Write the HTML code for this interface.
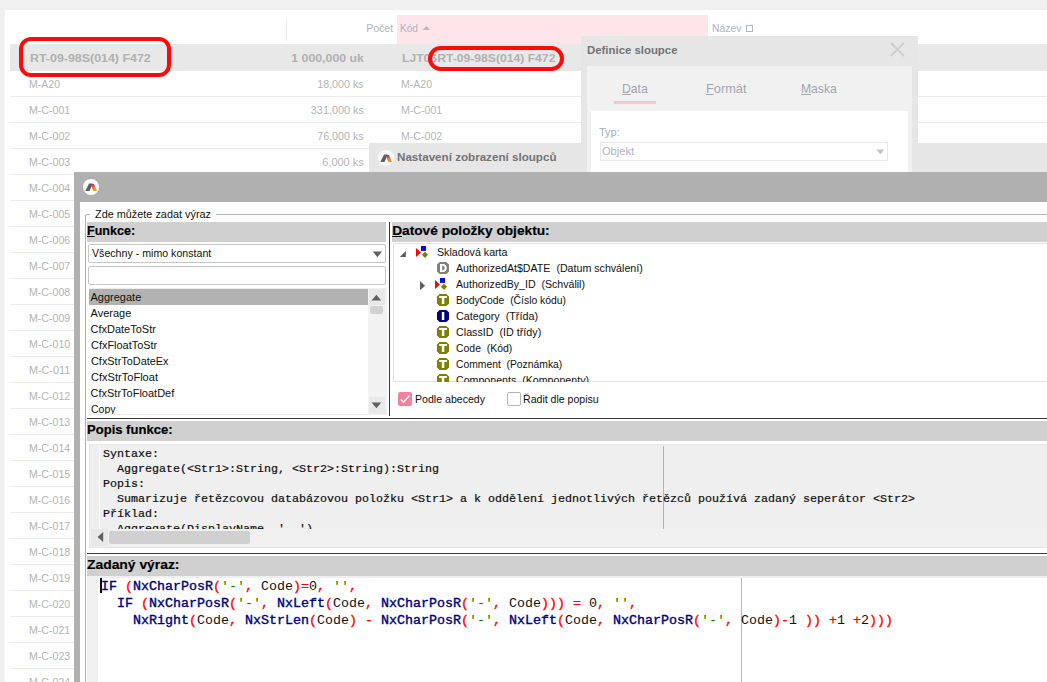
<!DOCTYPE html>
<html><head><meta charset="utf-8"><title>UI</title><style>
html,body{margin:0;padding:0;}
body{width:1047px;height:682px;overflow:hidden;background:#f0f0f0;position:relative;font-family:"Liberation Sans", sans-serif;}
div{position:absolute;box-sizing:border-box;overflow:hidden;}
.t{position:absolute;white-space:pre;line-height:1;display:block;}
.m{font-family:"Liberation Mono", monospace;}
svg{position:absolute;left:0;top:0;display:block;}
u{text-decoration:underline;text-underline-offset:1px;}
b{font-weight:700;}
.k{color:#000080;-webkit-text-stroke:0.35px #000080;} .p{color:#ff0000;-webkit-text-stroke:0.3px #ff0000;} .s{color:#008000;} .n{color:#101010;}
</style></head><body><div style="left:5px;top:10px;width:1042px;height:672px;background:#ffffff;"><div style="left:392px;top:5px;width:311px;height:29px;background:#fde5e9;"></div><div style="left:281px;top:8px;width:1px;height:23px;background:#e9e9e9;"></div><span class="t" style="top:13.29px;font-size:11px;color:#b0b4c0;right:654.00px;transform:scaleX(0.9595);transform-origin:100% 0;">Počet</span><span class="t" style="top:13.29px;font-size:11px;color:#b0b4c0;left:395.30px;transform:scaleX(0.9194);transform-origin:0 0;">Kód</span><div style="left:417px;top:15px;width:9px;height:6px"><svg width="9" height="6"><path d="M0.6 5 L4.4 0.9 L8.2 5 Z" fill="#bcbcbc"/></svg></div><span class="t" style="top:13.29px;font-size:11px;color:#b0b4c0;left:706.50px;transform:scaleX(0.9459);transform-origin:0 0;">Název</span><div style="left:741px;top:15px;width:7px;height:7px;background:transparent;border:1px solid #b8b8b8;"></div><div style="left:5px;top:34px;width:1037px;height:27px;background:#e8e8e8;"></div><span class="t" style="top:42.69px;font-size:11px;color:#b0b0b0;font-weight:700;left:25.00px;transform:scaleX(1.1280);transform-origin:0 0;">RT-09-98S(014) F472</span><span class="t" style="top:42.69px;font-size:11px;color:#b0b0b0;font-weight:700;right:683.00px;transform:scaleX(1.1181);transform-origin:100% 0;">1 000,000 uk</span><span class="t" style="top:42.69px;font-size:11px;color:#b0b0b0;font-weight:700;left:397.40px;transform:scaleX(1.1052);transform-origin:0 0;">LJT06RT-09-98S(014) F472</span><span class="t" style="top:68.69px;font-size:11px;color:#b4b4b4;left:24.30px;transform:scaleX(0.9566);transform-origin:0 0;">M-A20</span><span class="t" style="top:68.69px;font-size:11px;color:#b4b4b4;left:396.30px;transform:scaleX(0.9566);transform-origin:0 0;">M-A20</span><span class="t" style="top:68.69px;font-size:11px;color:#b4b4b4;right:683.00px;transform:scaleX(0.9748);transform-origin:100% 0;">18,000 ks</span><div style="left:5px;top:86px;width:1037px;height:1px;background:#ebebeb;"></div><span class="t" style="top:94.69px;font-size:11px;color:#b4b4b4;left:24.30px;transform:scaleX(0.9639);transform-origin:0 0;">M-C-001</span><span class="t" style="top:94.69px;font-size:11px;color:#b4b4b4;left:396.30px;transform:scaleX(0.9639);transform-origin:0 0;">M-C-001</span><span class="t" style="top:94.69px;font-size:11px;color:#b4b4b4;right:683.00px;transform:scaleX(0.9846);transform-origin:100% 0;">331,000 ks</span><div style="left:5px;top:112px;width:1037px;height:1px;background:#ebebeb;"></div><span class="t" style="top:120.69px;font-size:11px;color:#b4b4b4;left:24.30px;transform:scaleX(0.9639);transform-origin:0 0;">M-C-002</span><span class="t" style="top:120.69px;font-size:11px;color:#b4b4b4;left:396.30px;transform:scaleX(0.9639);transform-origin:0 0;">M-C-002</span><span class="t" style="top:120.69px;font-size:11px;color:#b4b4b4;right:683.00px;transform:scaleX(0.9748);transform-origin:100% 0;">76,000 ks</span><div style="left:5px;top:138px;width:1037px;height:1px;background:#ebebeb;"></div><span class="t" style="top:146.69px;font-size:11px;color:#b4b4b4;left:24.30px;transform:scaleX(0.9639);transform-origin:0 0;">M-C-003</span><span class="t" style="top:146.69px;font-size:11px;color:#b4b4b4;left:396.30px;transform:scaleX(0.9639);transform-origin:0 0;">M-C-003</span><span class="t" style="top:146.69px;font-size:11px;color:#b4b4b4;right:683.00px;transform:scaleX(0.9917);transform-origin:100% 0;">6,000 ks</span><div style="left:5px;top:164px;width:1037px;height:1px;background:#ebebeb;"></div><span class="t" style="top:172.69px;font-size:11px;color:#b4b4b4;left:24.30px;transform:scaleX(0.9639);transform-origin:0 0;">M-C-004</span><div style="left:5px;top:190px;width:1037px;height:1px;background:#ebebeb;"></div><span class="t" style="top:198.69px;font-size:11px;color:#b4b4b4;left:24.30px;transform:scaleX(0.9639);transform-origin:0 0;">M-C-005</span><div style="left:5px;top:216px;width:1037px;height:1px;background:#ebebeb;"></div><span class="t" style="top:224.69px;font-size:11px;color:#b4b4b4;left:24.30px;transform:scaleX(0.9639);transform-origin:0 0;">M-C-006</span><div style="left:5px;top:242px;width:1037px;height:1px;background:#ebebeb;"></div><span class="t" style="top:250.69px;font-size:11px;color:#b4b4b4;left:24.30px;transform:scaleX(0.9639);transform-origin:0 0;">M-C-007</span><div style="left:5px;top:268px;width:1037px;height:1px;background:#ebebeb;"></div><span class="t" style="top:276.69px;font-size:11px;color:#b4b4b4;left:24.30px;transform:scaleX(0.9639);transform-origin:0 0;">M-C-008</span><div style="left:5px;top:294px;width:1037px;height:1px;background:#ebebeb;"></div><span class="t" style="top:302.69px;font-size:11px;color:#b4b4b4;left:24.30px;transform:scaleX(0.9639);transform-origin:0 0;">M-C-009</span><div style="left:5px;top:320px;width:1037px;height:1px;background:#ebebeb;"></div><span class="t" style="top:328.69px;font-size:11px;color:#b4b4b4;left:24.30px;transform:scaleX(0.9639);transform-origin:0 0;">M-C-010</span><div style="left:5px;top:346px;width:1037px;height:1px;background:#ebebeb;"></div><span class="t" style="top:354.69px;font-size:11px;color:#b4b4b4;left:24.30px;transform:scaleX(0.9825);transform-origin:0 0;">M-C-011</span><div style="left:5px;top:372px;width:1037px;height:1px;background:#ebebeb;"></div><span class="t" style="top:380.69px;font-size:11px;color:#b4b4b4;left:24.30px;transform:scaleX(0.9639);transform-origin:0 0;">M-C-012</span><div style="left:5px;top:398px;width:1037px;height:1px;background:#ebebeb;"></div><span class="t" style="top:406.69px;font-size:11px;color:#b4b4b4;left:24.30px;transform:scaleX(0.9639);transform-origin:0 0;">M-C-013</span><div style="left:5px;top:424px;width:1037px;height:1px;background:#ebebeb;"></div><span class="t" style="top:432.69px;font-size:11px;color:#b4b4b4;left:24.30px;transform:scaleX(0.9639);transform-origin:0 0;">M-C-014</span><div style="left:5px;top:450px;width:1037px;height:1px;background:#ebebeb;"></div><span class="t" style="top:458.69px;font-size:11px;color:#b4b4b4;left:24.30px;transform:scaleX(0.9639);transform-origin:0 0;">M-C-015</span><div style="left:5px;top:476px;width:1037px;height:1px;background:#ebebeb;"></div><span class="t" style="top:484.69px;font-size:11px;color:#b4b4b4;left:24.30px;transform:scaleX(0.9639);transform-origin:0 0;">M-C-016</span><div style="left:5px;top:502px;width:1037px;height:1px;background:#ebebeb;"></div><span class="t" style="top:510.69px;font-size:11px;color:#b4b4b4;left:24.30px;transform:scaleX(0.9639);transform-origin:0 0;">M-C-017</span><div style="left:5px;top:528px;width:1037px;height:1px;background:#ebebeb;"></div><span class="t" style="top:536.69px;font-size:11px;color:#b4b4b4;left:24.30px;transform:scaleX(0.9639);transform-origin:0 0;">M-C-018</span><div style="left:5px;top:554px;width:1037px;height:1px;background:#ebebeb;"></div><span class="t" style="top:562.69px;font-size:11px;color:#b4b4b4;left:24.30px;transform:scaleX(0.9639);transform-origin:0 0;">M-C-019</span><div style="left:5px;top:580px;width:1037px;height:1px;background:#ebebeb;"></div><span class="t" style="top:588.69px;font-size:11px;color:#b4b4b4;left:24.30px;transform:scaleX(0.9639);transform-origin:0 0;">M-C-020</span><div style="left:5px;top:606px;width:1037px;height:1px;background:#ebebeb;"></div><span class="t" style="top:614.69px;font-size:11px;color:#b4b4b4;left:24.30px;transform:scaleX(0.9639);transform-origin:0 0;">M-C-021</span><div style="left:5px;top:632px;width:1037px;height:1px;background:#ebebeb;"></div><span class="t" style="top:640.69px;font-size:11px;color:#b4b4b4;left:24.30px;transform:scaleX(0.9639);transform-origin:0 0;">M-C-023</span><div style="left:5px;top:658px;width:1037px;height:1px;background:#ebebeb;"></div><span class="t" style="top:666.69px;font-size:11px;color:#b4b4b4;left:24.30px;transform:scaleX(0.9639);transform-origin:0 0;">M-C-024</span><div style="left:5px;top:684px;width:1037px;height:1px;background:#ebebeb;"></div></div><div style="left:19px;top:37px;width:152px;height:40px;border:4px solid #ff0a0a;border-radius:12px;"></div><div style="left:428px;top:46px;width:136px;height:25px;border:4px solid #ff0a0a;border-radius:12.5px;"></div><div style="left:369px;top:143px;width:678px;height:40px;background:#e6e6e6;"><div style="left:9px;top:7px;width:16px;height:16px"><svg width="16" height="16" viewBox="0 0 16 16"><defs><linearGradient id="lg" x1="0" y1="0" x2="0" y2="1"><stop offset="0" stop-color="#e6007e"/><stop offset="0.22" stop-color="#ea2a5a"/><stop offset="0.5" stop-color="#f07a1c"/><stop offset="1" stop-color="#f8a800"/></linearGradient></defs><circle cx="8" cy="8" r="8" fill="#fbfbfb"/><path d="M2.3 12.1 L6.1 4.4 L9.8 4.4 L6.5 12.1 Z" fill="#5e5e5e"/><path d="M9.3 4.9 L10.9 4.9 L14.0 12.1 L10.3 12.1 L8.5 7.6 Z" fill="url(#lg)"/></svg></div><span class="t" style="top:8.69px;font-size:11px;color:#737373;font-weight:700;left:28.00px;transform:scaleX(1.0564);transform-origin:0 0;">Nastavení zobrazení sloupců</span></div><div style="left:581px;top:36px;width:337px;height:150px;background:#e6e6e6;"><span class="t" style="top:8.69px;font-size:11px;color:#737373;font-weight:700;left:6.30px;transform:scaleX(1.0352);transform-origin:0 0;">Definice sloupce</span><div style="left:309px;top:6px;width:15px;height:15px"><svg width="15" height="15"><path d="M0.8 0.8 L14 14 M14 0.8 L0.8 14" stroke="#cdcdcd" stroke-width="1.8" fill="none"/></svg></div><div style="left:6px;top:30px;width:325px;height:120px;background:#f1f1f1;"><span class="t" style="top:16.00px;font-size:13px;color:#a2a5b0;left:35.00px;transform:scaleX(0.9374);transform-origin:0 0;"><u>D</u>ata</span><div style="left:27px;top:35px;width:42px;height:3px;background:#f8c4cd;"></div><span class="t" style="top:16.00px;font-size:13px;color:#a2a5b0;left:119.00px;transform:scaleX(0.9833);transform-origin:0 0;"><u>F</u>ormát</span><span class="t" style="top:16.00px;font-size:13px;color:#a2a5b0;left:214.00px;transform:scaleX(0.9331);transform-origin:0 0;"><u>M</u>aska</span><div style="left:4px;top:45px;width:317px;height:80px;background:#ffffff;"><span class="t" style="top:15.69px;font-size:11px;color:#a8abb6;left:8.00px;">Typ:</span><div style="left:9px;top:31px;width:288px;height:19px;background:#ffffff;border:1px solid #e9e9e9;"></div><span class="t" style="top:34.69px;font-size:11px;color:#b0b3bc;left:10.50px;transform:scaleX(1.0064);transform-origin:0 0;">Objekt</span><div style="left:285px;top:38px;width:9px;height:6px"><svg width="9" height="6"><path d="M0.3 0.6 L8.3 0.6 L4.3 5.4 Z" fill="#c4c4c4"/></svg></div></div></div></div><div style="left:74px;top:172px;width:973px;height:510px;background:#b0b0b0;"><div style="left:9px;top:7px;width:16px;height:16px"><svg width="16" height="16" viewBox="0 0 16 16"><defs><linearGradient id="lg" x1="0" y1="0" x2="0" y2="1"><stop offset="0" stop-color="#e6007e"/><stop offset="0.22" stop-color="#ea2a5a"/><stop offset="0.5" stop-color="#f07a1c"/><stop offset="1" stop-color="#f8a800"/></linearGradient></defs><circle cx="8" cy="8" r="8" fill="#fbfbfb"/><path d="M2.3 12.1 L6.1 4.4 L9.8 4.4 L6.5 12.1 Z" fill="#5e5e5e"/><path d="M9.3 4.9 L10.9 4.9 L14.0 12.1 L10.3 12.1 L8.5 7.6 Z" fill="url(#lg)"/></svg></div><div style="left:450px;top:9px;width:8px;height:1px;background:#b8b48c;"></div><div style="left:6px;top:30px;width:967px;height:480px;background:#ffffff;"><div style="left:5px;top:12px;width:1047px;height:682px;border:1px solid #b0b0b0;border-radius:2px;"></div><div style="left:10px;top:6px;width:126px;height:12px;background:#ffffff;"></div><span class="t" style="top:6.69px;font-size:11px;color:#101010;left:14.50px;transform:scaleX(0.9882);transform-origin:0 0;">Zde můžete zadat výraz</span><div style="left:7px;top:20px;width:299px;height:20px;background:#d0d0d0;"></div><span class="t" style="top:21.70px;font-size:13.7px;color:#000;font-weight:700;-webkit-text-stroke:0.2px #000;left:7.20px;transform:scaleX(0.9181);transform-origin:0 0;"><u>F</u>unkce:</span><div style="left:8px;top:42px;width:298px;height:19px;background:#ffffff;border:1px solid #c6c6c6;border-radius:2px;"></div><span class="t" style="top:45.69px;font-size:11px;color:#101010;left:11.70px;transform:scaleX(0.9660);transform-origin:0 0;">Všechny - mimo konstant</span><div style="left:292px;top:49px;width:11px;height:7px"><svg width="11" height="7"><path d="M0.8 0.6 L10 0.6 L5.4 6.2 Z" fill="#606060"/></svg></div><div style="left:8px;top:64px;width:298px;height:19px;background:#ffffff;border:1px solid #c6c6c6;border-radius:2px;"></div><div style="left:9px;top:86px;width:298px;height:127px;background:#ffffff;"><div style="left:0px;top:126px;width:298px;height:1px;background:#ececec;"></div><div style="left:0px;top:0px;width:297px;height:1px;background:#ececec;"></div><div style="left:0px;top:1px;width:279px;height:16px;background:#b2b2b2;"></div><div style="left:0px;top:0px;width:279px;height:126px;"><span class="t" style="top:115.69px;font-size:11px;color:#101010;left:1.50px;transform:scaleX(0.9538);transform-origin:0 0;">Copy</span></div><span class="t" style="top:3.69px;font-size:11px;color:#101010;left:1.50px;">Aggregate</span><span class="t" style="top:19.69px;font-size:11px;color:#101010;left:1.50px;">Average</span><span class="t" style="top:35.69px;font-size:11px;color:#101010;left:1.50px;">CfxDateToStr</span><span class="t" style="top:51.69px;font-size:11px;color:#101010;left:1.50px;transform:scaleX(0.9941);transform-origin:0 0;">CfxFloatToStr</span><span class="t" style="top:67.69px;font-size:11px;color:#101010;left:1.50px;transform:scaleX(0.9904);transform-origin:0 0;">CfxStrToDateEx</span><span class="t" style="top:83.69px;font-size:11px;color:#101010;left:1.50px;transform:scaleX(1.0054);transform-origin:0 0;">CfxStrToFloat</span><span class="t" style="top:99.69px;font-size:11px;color:#101010;left:1.50px;">CfxStrToFloatDef</span><div style="left:279px;top:0px;width:19px;height:127px;background:#f2f2f2;"></div><div style="left:280px;top:1px;width:16px;height:16px;background:#e8e8e8;"></div><div style="left:282px;top:5.600000000000023px;width:11px;height:7px"><svg width="11" height="7"><path d="M0.6 6.4 L10.2 6.4 L5.4 0.8 Z" fill="#606060"/></svg></div><div style="left:281px;top:18px;width:13px;height:8px;background:#d2d2d2;border-radius:2px;"></div><div style="left:280px;top:109px;width:16px;height:17px;background:#e9e9e9;"></div><div style="left:282px;top:114px;width:11px;height:7px"><svg width="11" height="7"><path d="M0.6 0.6 L10.2 0.6 L5.4 6.2 Z" fill="#606060"/></svg></div></div><div style="left:309px;top:20px;width:1px;height:194px;background:#383838;"></div><div style="left:312px;top:20px;width:655px;height:20px;background:#d0d0d0;"></div><span class="t" style="top:21.70px;font-size:13.7px;color:#000;font-weight:700;-webkit-text-stroke:0.2px #000;left:312.20px;"><u>D</u>atové položky objektu:</span><div style="left:313px;top:41px;width:654px;height:139px;background:#ffffff;box-shadow:inset 1px 1px 0 0 #e2e2e2, inset 0 -1px 0 0 #e2e2e2;"><div style="left:6px;top:7px;width:8px;height:8px"><svg width="8" height="8"><path d="M6.9 1 L6.9 6.9 L0.8 6.9 Z" fill="#5e5e5e"/></svg></div><div style="left:23px;top:3px;width:13px;height:14px"><svg width="13" height="14" viewBox="0 0 13 14"><path d="M0 2 L5 6.5 L0 11 Z" fill="#ff0000"/><rect x="5" y="0" width="5" height="4.9" fill="#0000ff"/><path d="M9 5.7 L12.1 8.8 L9 11.9 L5.9 8.8 Z" fill="#808000"/></svg></div><span class="t" style="top:3.69px;font-size:11px;color:#101010;left:43.50px;transform:scaleX(0.9689);transform-origin:0 0;">Skladová karta</span><div style="left:44px;top:19px;width:12px;height:12px"><svg width="12" height="12" viewBox="0 0 12 12"><path d="M2.6 0 H9.4 L12 2.6 V9.4 L9.4 12 H2.6 L0 9.4 V2.6 Z" fill="#808080"/><path d="M3 2 H6.2 C8.6 2 9.7 3.7 9.7 6 C9.7 8.3 8.6 10 6.2 10 H3 Z M5.2 3.7 V8.3 H6.0 C7.2 8.3 7.6 7.3 7.6 6 C7.6 4.7 7.2 3.7 6.0 3.7 Z" fill="#fff" fill-rule="evenodd"/></svg></div><span class="t" style="top:19.69px;font-size:11px;color:#101010;left:62.75px;transform:scaleX(0.9677);transform-origin:0 0;">AuthorizedAt$DATE  (Datum schválení)</span><div style="left:42px;top:35px;width:13px;height:14px"><svg width="13" height="14" viewBox="0 0 13 14"><path d="M0 2 L5 6.5 L0 11 Z" fill="#ff0000"/><rect x="5" y="0" width="5" height="4.9" fill="#0000ff"/><path d="M9 5.7 L12.1 8.8 L9 11.9 L5.9 8.8 Z" fill="#808000"/></svg></div><div style="left:27px;top:37.80000000000001px;width:6px;height:10px"><svg width="6" height="10"><path d="M0 0.1 L5.1 4.7 L0 9.3 Z" fill="#5e5e5e"/></svg></div><span class="t" style="top:35.69px;font-size:11px;color:#101010;left:62.75px;transform:scaleX(0.9635);transform-origin:0 0;">AuthorizedBy_ID  (Schválil)</span><div style="left:44px;top:51px;width:12px;height:12px"><svg width="12" height="12" viewBox="0 0 12 12"><path d="M2.6 0 H9.4 L12 2.6 V9.4 L9.4 12 H2.6 L0 9.4 V2.6 Z" fill="#808000"/><path d="M2.2 1.9 H9.9 V4 H7.3 V10 H4.8 V4 H2.2 Z" fill="#fff"/></svg></div><span class="t" style="top:51.69px;font-size:11px;color:#101010;left:62.75px;transform:scaleX(0.9419);transform-origin:0 0;">BodyCode  (Číslo kódu)</span><div style="left:44px;top:67px;width:12px;height:12px"><svg width="12" height="12" viewBox="0 0 12 12"><path d="M2.6 0 H9.4 L12 2.6 V9.4 L9.4 12 H2.6 L0 9.4 V2.6 Z" fill="#000080"/><rect x="4.8" y="2" width="2.5" height="8" fill="#fff"/></svg></div><span class="t" style="top:67.69px;font-size:11px;color:#101010;left:62.75px;transform:scaleX(0.9791);transform-origin:0 0;">Category  (Třída)</span><div style="left:44px;top:83px;width:12px;height:12px"><svg width="12" height="12" viewBox="0 0 12 12"><path d="M2.6 0 H9.4 L12 2.6 V9.4 L9.4 12 H2.6 L0 9.4 V2.6 Z" fill="#808000"/><path d="M2.2 1.9 H9.9 V4 H7.3 V10 H4.8 V4 H2.2 Z" fill="#fff"/></svg></div><span class="t" style="top:83.69px;font-size:11px;color:#101010;left:62.75px;transform:scaleX(0.9753);transform-origin:0 0;">ClassID  (ID třídy)</span><div style="left:44px;top:99px;width:12px;height:12px"><svg width="12" height="12" viewBox="0 0 12 12"><path d="M2.6 0 H9.4 L12 2.6 V9.4 L9.4 12 H2.6 L0 9.4 V2.6 Z" fill="#808000"/><path d="M2.2 1.9 H9.9 V4 H7.3 V10 H4.8 V4 H2.2 Z" fill="#fff"/></svg></div><span class="t" style="top:99.69px;font-size:11px;color:#101010;left:62.75px;transform:scaleX(0.9484);transform-origin:0 0;">Code  (Kód)</span><div style="left:44px;top:115px;width:12px;height:12px"><svg width="12" height="12" viewBox="0 0 12 12"><path d="M2.6 0 H9.4 L12 2.6 V9.4 L9.4 12 H2.6 L0 9.4 V2.6 Z" fill="#808000"/><path d="M2.2 1.9 H9.9 V4 H7.3 V10 H4.8 V4 H2.2 Z" fill="#fff"/></svg></div><span class="t" style="top:115.69px;font-size:11px;color:#101010;left:62.75px;transform:scaleX(0.9395);transform-origin:0 0;">Comment  (Poznámka)</span><div style="left:44px;top:131px;width:12px;height:12px"><svg width="12" height="12" viewBox="0 0 12 12"><path d="M2.6 0 H9.4 L12 2.6 V9.4 L9.4 12 H2.6 L0 9.4 V2.6 Z" fill="#808000"/><path d="M2.2 1.9 H9.9 V4 H7.3 V10 H4.8 V4 H2.2 Z" fill="#fff"/></svg></div><span class="t" style="top:131.69px;font-size:11px;color:#101010;left:62.75px;transform:scaleX(0.9667);transform-origin:0 0;">Components  (Komponenty)</span></div><div style="left:318px;top:190px;width:14px;height:14px;background:#f3829a;border-radius:2px;"></div><div style="left:318px;top:190px;width:14px;height:14px"><svg width="14" height="14"><path d="M2.6 7.2 L5.6 10.2 L11.4 3.4" stroke="#fff" stroke-width="1.5" fill="none"/></svg></div><span class="t" style="top:191.69px;font-size:11px;color:#101010;left:334.50px;transform:scaleX(0.9618);transform-origin:0 0;">Podle abecedy</span><div style="left:427px;top:190px;width:14px;height:14px;background:#ffffff;border:1px solid #b4b4b4;border-radius:2px;"></div><span class="t" style="top:191.69px;font-size:11px;color:#101010;left:443.30px;transform:scaleX(0.9602);transform-origin:0 0;">Řadit dle popisu</span><div style="left:7px;top:216px;width:1047px;height:1px;background:#383838;"></div><div style="left:7px;top:219px;width:960px;height:20px;background:#d0d0d0;"></div><span class="t" style="top:220.80px;font-size:13.7px;color:#000;font-weight:700;-webkit-text-stroke:0.2px #000;left:7.20px;transform:scaleX(0.9526);transform-origin:0 0;">Popis funkce:</span><div style="left:9px;top:242px;width:958px;height:104px;background:#f0f0f0;box-shadow:inset 1px 1px 0 0 #e6e6e6, inset 0 -1px 0 0 #e6e6e6;"><div style="left:1px;top:1px;width:957px;height:84px;background:#efefef;"><div style="left:9px;top:0px;width:1px;height:84px;background:#fafafa;"></div><div style="left:573px;top:1px;width:1px;height:83px;background:#b4b4b4;"></div><span class="t m" style="top:4.45px;font-size:10.5px;color:#101010;-webkit-text-stroke:0.2px #101010;left:13.30px;transform:scaleX(1.1106);transform-origin:0 0;">Syntaxe:</span><span class="t m" style="top:19.45px;font-size:10.5px;color:#101010;-webkit-text-stroke:0.2px #101010;left:13.30px;transform:scaleX(1.1109);transform-origin:0 0;">  Aggregate(&lt;Str1&gt;:String, &lt;Str2&gt;:String):String</span><span class="t m" style="top:34.45px;font-size:10.5px;color:#101010;-webkit-text-stroke:0.2px #101010;left:13.30px;transform:scaleX(1.1107);transform-origin:0 0;">Popis:</span><span class="t m" style="top:49.45px;font-size:10.5px;color:#101010;-webkit-text-stroke:0.2px #101010;left:13.30px;transform:scaleX(1.1109);transform-origin:0 0;">  Sumarizuje řetězcovou databázovou položku &lt;Str1&gt; a k oddělení jednotlivých řetězců používá zadaný seperátor &lt;Str2&gt;</span><span class="t m" style="top:64.45px;font-size:10.5px;color:#101010;-webkit-text-stroke:0.2px #101010;left:13.30px;transform:scaleX(1.1106);transform-origin:0 0;">Příklad:</span><span class="t m" style="top:79.45px;font-size:10.5px;color:#101010;-webkit-text-stroke:0.2px #101010;left:13.30px;transform:scaleX(1.1109);transform-origin:0 0;">  Aggregate(DisplayName, &#x27;, &#x27;)</span></div><div style="left:2px;top:85px;width:17px;height:17px;background:#e8e8e8;"></div><div style="left:8px;top:88px;width:7px;height:10px"><svg width="7" height="10"><path d="M6.2 0 L6.2 10 L0.6 5 Z" fill="#5e5e5e"/></svg></div><div style="left:19.5px;top:87px;width:141px;height:13px;background:#d0d0d0;border-radius:2px;"></div></div><div style="left:7px;top:351px;width:1047px;height:1px;background:#383838;"></div><div style="left:7px;top:354px;width:960px;height:20px;background:#d0d0d0;"></div><span class="t" style="top:355.80px;font-size:13.7px;color:#000;font-weight:700;-webkit-text-stroke:0.2px #000;left:7.20px;transform:scaleX(1.0132);transform-origin:0 0;">Zadaný výraz:</span><div style="left:7px;top:374px;width:960px;height:106px;background:#ffffff;"><div style="left:0px;top:0px;width:11px;height:682px;background:#f0f0f0;"></div><div style="left:0px;top:0px;width:1047px;height:1.5px;background:#f0f0f0;"></div><div style="left:654px;top:2px;width:1px;height:682px;background:#b6b6b6;"></div><div style="left:13px;top:2px;width:2px;height:15px;background:#000000;"></div><span class="t m" style="top:4.80px;font-size:12px;color:#101010;left:14.40px;transform:scaleX(1.1107);transform-origin:0 0;"><span class="k">IF</span> <span class="p">(</span><span class="k">NxCharPosR</span><span class="p">(</span><span class="s">&#x27;-&#x27;</span><span class="p">,</span> <span class="n">Code</span><span class="p">)</span><span class="p">=</span><span class="n">0</span><span class="p">,</span> <span class="s">&#x27;&#x27;</span><span class="p">,</span></span><span class="t m" style="top:21.80px;font-size:12px;color:#101010;left:14.40px;transform:scaleX(1.1107);transform-origin:0 0;">  <span class="k">IF</span> <span class="p">(</span><span class="k">NxCharPosR</span><span class="p">(</span><span class="s">&#x27;-&#x27;</span><span class="p">,</span> <span class="k">NxLeft</span><span class="p">(</span><span class="n">Code</span><span class="p">,</span> <span class="k">NxCharPosR</span><span class="p">(</span><span class="s">&#x27;-&#x27;</span><span class="p">,</span> <span class="n">Code</span><span class="p">)</span><span class="p">)</span><span class="p">)</span> <span class="p">=</span> <span class="n">0</span><span class="p">,</span> <span class="s">&#x27;&#x27;</span><span class="p">,</span></span><span class="t m" style="top:38.80px;font-size:12px;color:#101010;left:14.40px;transform:scaleX(1.1107);transform-origin:0 0;">    <span class="k">NxRight</span><span class="p">(</span><span class="n">Code</span><span class="p">,</span> <span class="k">NxStrLen</span><span class="p">(</span><span class="n">Code</span><span class="p">)</span> <span class="p">-</span> <span class="k">NxCharPosR</span><span class="p">(</span><span class="s">&#x27;-&#x27;</span><span class="p">,</span> <span class="k">NxLeft</span><span class="p">(</span><span class="n">Code</span><span class="p">,</span> <span class="k">NxCharPosR</span><span class="p">(</span><span class="s">&#x27;-&#x27;</span><span class="p">,</span> <span class="n">Code</span><span class="p">)</span><span class="p">-</span><span class="n">1</span> <span class="p">)</span><span class="p">)</span> <span class="p">+</span><span class="n">1</span> <span class="p">+</span><span class="n">2</span><span class="p">)</span><span class="p">)</span><span class="p">)</span></span></div></div></div></body></html>
